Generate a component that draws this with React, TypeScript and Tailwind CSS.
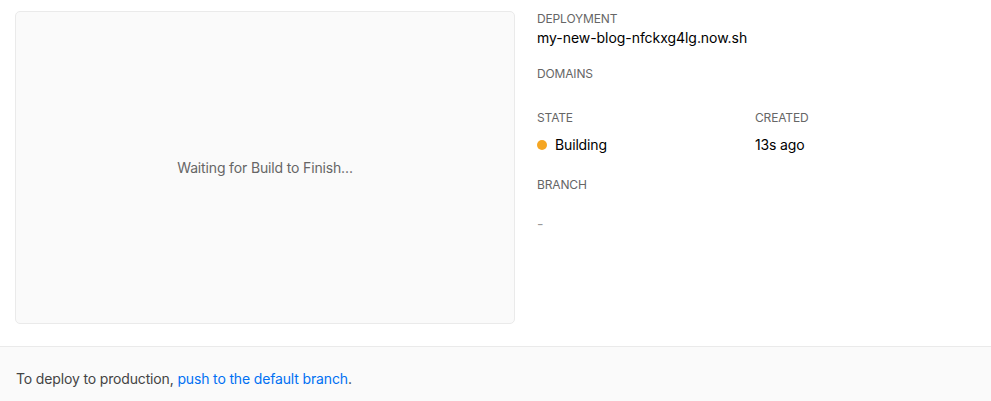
import React from "react";

function Label({ children }: { children: React.ReactNode }) {
  return <div className="text-[12px] leading-[16px] uppercase text-[#666]">{children}</div>;
}

export default function App() {
  return (
    <div className="w-[991px] h-[401px] bg-white overflow-hidden font-['Inter',sans-serif] tracking-[-0.15px] text-black">
      <div className="flex pl-[15px] pt-[11px] h-[346px]">
        <div className="w-[500px] h-[313px] rounded-[5px] border border-[#eaeaea] bg-[#fafafa] flex items-center justify-center">
          <span className="text-[14px] text-[#666]">Waiting for Build to Finish...</span>
        </div>
        <div className="ml-[22px] w-[440px]">
          <Label>Deployment</Label>
          <div className="mt-[1px] text-[14px] leading-[20px] tracking-[-0.05px]">my-new-blog-nfckxg4lg.now.sh</div>
          <div className="mt-[18px]">
            <Label>Domains</Label>
          </div>
          <div className="mt-[28px] flex">
            <div className="w-[218px]">
              <Label>State</Label>
              <div className="mt-[9px] flex items-center gap-[8px] text-[14px] leading-[20px]">
                <span className="w-[10px] h-[10px] rounded-full bg-[#f5a623]" />
                <span>Building</span>
              </div>
            </div>
            <div>
              <Label>Created</Label>
              <div className="mt-[9px] text-[14px] leading-[20px]">13s ago</div>
            </div>
          </div>
          <div className="mt-[22px]">
            <Label>Branch</Label>
          </div>
          <div className="mt-[21px] text-[14px] leading-[20px] text-[#999]">-</div>
        </div>
      </div>
      <div className="border-t border-[#eaeaea] bg-[#fafafa] h-[60px] pl-[16px] pt-[22px] text-[14px] leading-[20px] text-[#444]">
        To deploy to production, <span className="text-[#0070f3]">push to the default branch</span>.
      </div>
    </div>
  );
}
